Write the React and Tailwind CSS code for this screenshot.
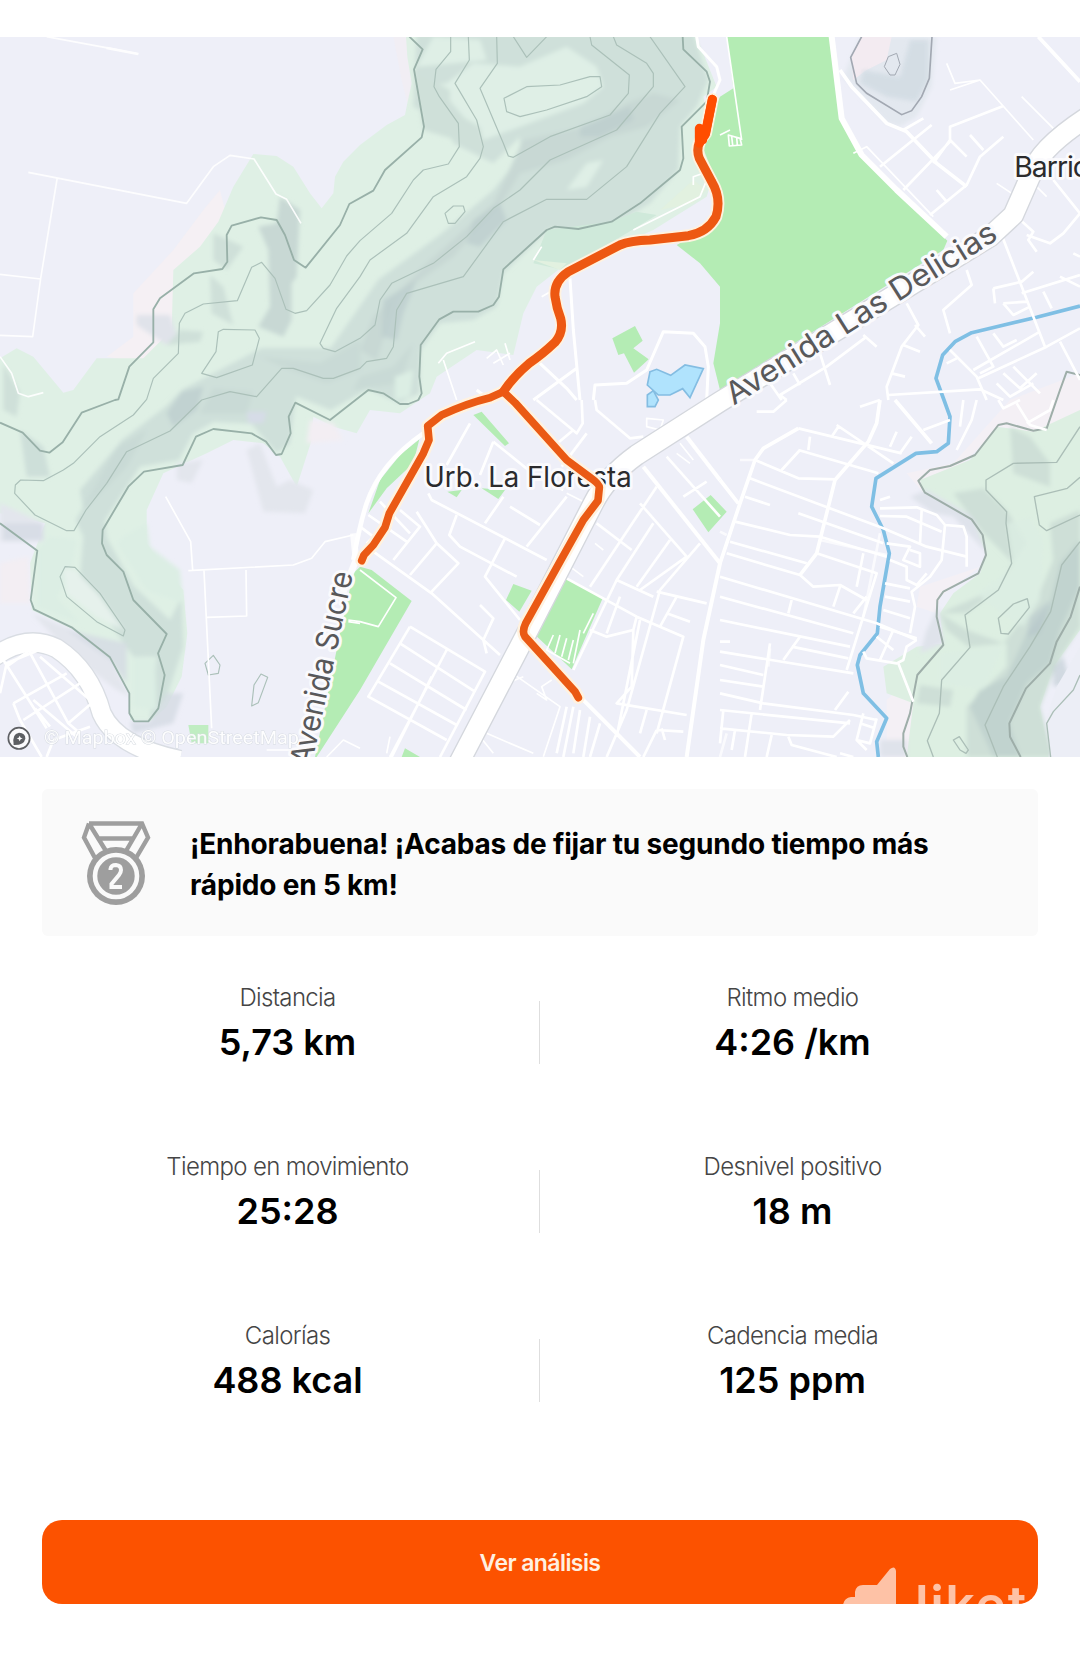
import React from 'react';

const stats = [
  { label: 'Distancia', value: '5,73 km' },
  { label: 'Ritmo medio', value: '4:26 /km' },
  { label: 'Tiempo en movimiento', value: '25:28' },
  { label: 'Desnivel positivo', value: '18 m' },
  { label: 'Calorías', value: '488 kcal' },
  { label: 'Cadencia media', value: '125 ppm' },
];

// The map is drawn at 3x and split in sectors, each with its own origin
const NW = 'translate(0 90)';
const N = 'translate(1080 90)';
const NE = 'translate(2160 90)';
const SW = 'translate(0 1200)';
const S = 'translate(1080 1200)';
const SE = 'translate(2160 1200)';

const Terrain = () => (
  <g>
    <filter id="relief" x="-5%" y="-5%" width="110%" height="110%">
      <feGaussianBlur stdDeviation="6" />
    </filter>
    <g transform={NW}>
      {/* pale slopes */}
      <path fill="#f5f0f4" d="M520 660 610 540 660 480 700 640 540 760 520 980 440 1000 320 980 400 920 400 790Z" />
      <path fill="#f1eef4" d="M1180 20 1240 20 1240 170 1222 220 1205 150Z" />
      <path
        fill="#dff0e5"
        d="M1218 20 1222 80 1235 160 1222 220 1215 255 1160 285 1080 345 1030 395 1005 440 1000 490 965 535 930 490 880 410 830 378 760 372 700 470 655 575 600 650 520 720 515 900 430 985 290 985 220 1080 190 1088 150 1040 100 980 50 955 0 985 0 1450 135 1480 105 1560 90 1600 95 1740 220 1800 330 1890 390 1990 390 2070 450 2075 500 2030 545 1940 562 1810 550 1680 490 1610 440 1540 440 1440 490 1330 620 1270 700 1230 790 1240 840 1280 890 1370 935 1230 940 1160 1000 1190 1070 1210 1110 1140 1200 1150 1290 1090 1310 1040 1430 960 1540 975 1570 850 1610 770 1700 700 1870 640 1960 600 2120 500 2150 400 2110 200 2150 170 2090 20Z"
      />
      <g filter="url(#relief)">
        <path fill="#e0e3ea" d="M410 855 510 855 535 930 500 945 410 885Z" />
        {/* shaded relief */}
        <path fill="#cfe0da" d="M1250 10 2080 10 2125 150 2090 230 2040 290 2035 420 1950 520 1850 580 1730 610 1650 595 1510 730 1490 830 1420 870 1320 880 1262 960 1258 1090 1198 1120 1105 1078 992 1140 888 1099 870 1240 830 1270 754 1181 640 1176 578 1212 537 1290 420 1310 315 1471 320 1522 400 1667 510 1770 545 1700 550 1850 500 2000 450 2070 470 1880 400 1880 330 1780 240 1640 250 1520 227 1471 362 1233 496 1130 548 1078 785 954 992 954 1136 748 1322 613 1480 480 1560 380 1560 320 1480 400 1360 340 1340 280 1240 230Z" />
        <path fill="#dfefe6" d="M1250 170 1340 160 1420 100 1560 110 1700 50 1790 110 1810 170 1750 220 1560 290 1450 330 1340 200ZM1700 480 1760 400 1810 390 1760 470ZM1300 20 1440 30 1460 90 1250 110Z" />
        <path fill="#c8d8d4" d="M1570 330 1760 290 1880 220 1960 190 2040 210 1940 290 1830 320 1700 390 1560 430 1500 530 1430 600 1360 680 1290 730 1190 800 1130 990 1080 960 1120 860 1280 700 1480 520ZM840 500 900 540 890 740 875 760 875 870 850 920 775 890 810 830 805 660 775 590 830 580Z" />
        <path fill="#bccdce" d="M1740 290 1890 230 1900 270 1800 320 1740 320ZM1400 640 1420 570 1500 520 1520 570 1440 650ZM1150 810 1250 750 1210 850 1190 930 1145 920ZM545 1085 610 1070 590 1140 520 1190 500 1150Z" opacity=".75" />
        <path fill="#c6d7d4" d="M780 980 960 1000 1080 930 1080 1020 980 1060 870 1020ZM60 1200 130 1250 150 1340 80 1340ZM640 1075 760 1085 740 1150 600 1150ZM350 1250 440 1200 380 1310 250 1440 240 1380ZM1240 940 1180 1010 1080 1040 1060 1080 1200 1060Z" opacity=".7" />
        <path fill="#cfe0d9" d="M640 610 730 650 680 720 640 690ZM630 735 670 770 700 885 635 850ZM540 900 610 905 600 935 500 945ZM1240 120 1350 180 1350 240 1440 290 1460 380 1370 330 1270 300ZM10 1000 60 1090 50 1160 10 1140Z" />
        <path fill="#e3e6ed" d="M0 1420 130 1480 130 1535 0 1535ZM530 1300 610 1290 575 1360 530 1350ZM740 1260 780 1240 830 1370 870 1350 940 1380 915 1450 790 1445ZM95 1750 220 1800 330 1890 390 2000 350 1980 220 1880Z" />
        <path fill="#d4dbe3" d="M10 1480 130 1480 130 1530 10 1530ZM200 1800 380 1840 380 1960 330 1890ZM500 1990 550 1990 520 2080 400 2110 390 2075 450 2075Z" opacity=".8" />
        <path fill="#f3eef3" d="M0 1600 85 1580 90 1720 0 1720ZM930 1170 1000 1180 1030 1230 920 1240Z" />
        <path fill="#d6dbe8" d="M740 1145 800 1145 790 1180 745 1180Z" opacity=".9" />
        <path fill="#dceee4" d="M150 1520 230 1530 210 1640 170 1700 240 1780 110 1730 110 1560ZM370 1520 440 1480 450 1550 540 1620 550 1720 440 1680 350 1540ZM400 1880 465 1890 470 2040 400 2030ZM1185 1040 1240 1020 1230 1100 1185 1110Z" />
        <path fill="#e6f1ec" d="M190 1615 225 1620 300 1700 370 1800 290 1760 200 1690Z" />
      </g>
    </g>
    <g transform={N}>
      <path fill="#cfe9da" d="M560 600 750 575 830 545 890 555 800 610 610 720 520 700Z" />
      <path fill="#e2f1e0" d="M900 540 1000 450 1040 480 1000 520ZM520 690 620 700 600 720Z" />
    </g>
    <g fill="none" stroke="#abc0b9" strokeWidth="3.5" strokeLinejoin="round" transform={NW}>
      <path strokeWidth="5.5" stroke="#98b0a8" d="M1228 20 1268 58 1242 118 1272 290 1265 322 1155 420 1120 482 1048 522 1020 585 917 713 882 690 855 615 830 570 783 562 695 587 680 615 682 695 667 717 582 730 480 805 460 838 460 937 388 1010 355 1108 345 1110 245 1148 188 1237 148 1268 120 1262 68 1208 0 1178M0 1480 112 1562 92 1710 102 1738 215 1792 330 1882 388 1990 388 2050 402 2074 445 2074 475 2035 494 1935 474 1870 500 1812 400 1710 370 1625 320 1575 306 1540 308 1500 385 1370 432 1325 548 1305 588 1220 640 1197 755 1210 798 1235 828 1275 845 1272 872 1210 866 1160 886 1118 990 1170 1105 1080 1150 1090 1200 1122 1225 1122 1255 1110 1265 1090 1258 1040 1262 945 1318 868 1360 845 1435 845 1480 825 1497 800 1510 718 1640 600 1665 590 1735 597 1835 575 1920 520 2040 420 2050 385 2045 290 2120 215 2130 155 2120 125 2050 58 2048 20" />
      <path d="M1352 20V65L1308 118 1302 170 1318 200 1375 280 1378 350 1345 402 1270 420 1240 450 1175 550 1080 632 1040 678 990 765 920 842 885 850 858 838 825 745 785 697 755 712 712 812 610 822 555 850 538 880 535 970 460 1045 440 1108 400 1155 300 1220 220 1300 190 1320 130 1352 62 1350 46 1365 44 1390 105 1455 200 1502 222 1502 258 1440 320 1360 380 1265 510 1203 605 1110 690 1085 770 1100 845 1015 880 1015 970 1045 1000 1045 1080 1015 1100 995 1160 985 1180 950 1190 840 1220 790 1390 740 1510 575 1640 508 1760 508 1880 410 1980 250 2055 170 1950 20" />
      <path d="M1405 20 1408 90 1365 160 1430 270 1450 350 1440 385 1400 440 1300 500 1220 610 1110 690 1080 740 1010 835 960 940 970 955 1005 965 1080 925 1125 885 1140 810 1175 760 1300 700 1400 620 1480 535 1560 480 1650 390 1850 300 1960 170 1960 130 1940 100 1850 45 1840 20" />
      <path d="M1490 20 1492 100 1440 175 1510 340 1525 378 1540 382 1650 320 1830 255 1885 190 1888 135 1775 45 1770 20M655 905 670 898 765 900 778 925 757 1005 650 1043 605 1030 648 965ZM1512 205 1580 170 1680 165 1770 140 1800 140 1805 170 1760 200 1640 240 1560 260 1520 245ZM1335 550 1360 528 1390 528 1395 545 1365 580 1345 580ZM1540 20 1580 82 1640 20M180 1640 195 1610 225 1612 300 1690 375 1800 370 1818 290 1775 200 1700ZM615 1900 640 1876 660 1905 655 1930 625 1935ZM783 1932 803 1942 775 2018 755 2028 762 1965Z" />
    </g>

    {/* north east knoll */}
    <g transform={NE}>
      <path fill="#e3e8ef" d="M420 20H650L635 170 590 260 540 290 500 280 370 140Z" filter="url(#relief)" />
      <path fill="#f3ebf1" d="M425 20H515L500 90 440 120 400 150 395 80Z" />
      <path fill="#d2dce3" d="M570 30H625V150L590 215 500 200 420 160 430 120 540 140Z" opacity=".85" filter="url(#relief)" />
      <g fill="none" stroke="#a2a8b2" strokeWidth="5">
        <path d="M425 20 392 82 410 160 440 190 545 254 575 242 605 200 628 145 636 20" />
        <path strokeWidth="3" d="M505 80 530 70 540 103 525 135 510 135 493 110Z" />
      </g>
    </g>

    {/* south east hills */}
    <g transform={SE}>
      <path fill="#f4f0f5" d="M870 0 1080 -80V80L1000 110 840 80 760 160 620 290 560 220 700 190ZM600 560 780 500 660 590 650 640 590 620ZM500 900 590 820 570 1071 500 1071Z" />
      <path fill="#ddefe2" d="M830 80 940 95 1080 30 1080 690 1000 800 960 920 985 1071H560L580 910 500 880 490 800 590 740 670 730 660 640 700 580 780 520 800 460 740 350 610 280 600 240 750 180Z" />
      <g filter="url(#relief)">
        <path fill="#dfe3eb" d="M570 290 620 270 760 350 800 460 700 350 640 340ZM620 690 655 620 670 730 600 760ZM480 1020 560 1020 560 1071 480 1071Z" />
        <path fill="#cedfd7" d="M700 280 790 265 860 330 920 430 870 500 830 570 740 640 660 640 680 690 745 740 860 730 860 800 740 920 740 1071H1000L960 920 1010 790 1080 680V330L990 370 1000 480 950 600 850 730 740 690 660 640 840 560 880 490 790 400ZM870 80 930 110 990 190 990 260 880 220ZM600 855 700 870 690 920 590 910Z" />
        <path fill="#c1d3cf" d="M1080 420 1020 490 990 610 920 700 860 830 780 870 750 920 820 1071H900L868 970 920 850 990 790 1020 690 1080 560Z" />
        <path fill="#dceee4" d="M860 370 930 350 970 420 960 600 910 680 840 640 770 580 880 500ZM660 760 850 740 790 870 660 850Z" opacity=".8" />
        <path fill="#b3c4ca" d="M930 650 990 600 960 700 920 710ZM1000 800 1030 770 1050 850 1000 860Z" opacity=".5" />
      </g>
      <path fill="#eceef6" d="M1080 740V1071H990L978 960 1010 860Z" />
      <g fill="none" stroke="#abbeb7" strokeWidth="4" strokeLinejoin="round">
        <path strokeWidth="6" stroke="#9eaea9" d="M1080 -75 1040 -85 1020 -30 980 85 940 92 860 70 835 75 765 165 690 198 630 210 595 242 615 278 755 358 788 405 798 465 775 520 670 575 652 600 650 650 670 735 592 825 570 940 550 1000 550 1040 562 1071M1080 560 1052 650 1010 725 990 790 918 865 868 970 870 1010 902 1071" />
        <path d="M1080 80 1010 187 880 190 798 240 798 270 860 335 858 370 875 490 835 570 735 645 750 742 665 840 658 940 622 1022 640 1071M1080 425 1025 495 992 635 930 740 850 860 795 975 832 1071M1080 825 1060 870 1000 935 980 970 992 1071M1080 232 1042 265 943 290 958 375 980 392 1080 345M835 655 880 612 922 596 928 622 865 702 843 700ZM700 1020 718 1010 745 1050 738 1060 720 1050Z" />
      </g>
    </g>
  </g>
);

const Parks = () => (
  <g fill="#b4ecb4">
    <path
      transform={NE}
      d="M20 20H330L365 270 430 390 540 490 682 632 670 660 0 1080 -20 1000 0 880 0 770 -60 700 -130 645 -50 600 0 540 -10 460 -60 330 0 200 40 175Z"
    />
    <g transform={N}>
      <path d="M757 925 825 888 848 932 820 955 866 988 822 1028 792 970 775 975Z" />
    </g>
    <g transform={S}>
      <path d="M340 45 365 35 447 130 435 138ZM178 118 160 190 80 265 25 340 60 240 120 165ZM262 275 305 270 290 292ZM365 265 435 270 415 297ZM460 552 515 572 478 635 438 600ZM615 532 728 595 635 808 520 700ZM1052 285 1100 335 1045 397 998 328ZM0 500 35 510 155 603 0 870 -130 1071 -135 1071 -60 700 -20 520ZM135 1045 180 1071H125Z" />
    </g>
    <g transform={SW}>
      <path d="M565 975H625V1030H575ZM400 1048 455 1055 460 1071H410Z" opacity=".8" />
    </g>
  </g>
);

const Water = () => (
  <g fill="#b0e3fd" stroke="#84bde2" strokeWidth="5">
    <path transform={N} d="M870 1025 890 1018 932 1036 975 1005 1030 1016 990 1103 968 1076 930 1095 895 1095 862 1065ZM862 1095 880 1082 895 1110 885 1130 862 1130Z" />
    <g fill="none" stroke="#7fbfe4" strokeWidth="11" strokeLinejoin="round">
      <path transform={NE} d="M1080 828 950 862 755 908 705 935 668 975 648 1045 672 1110 690 1160 685 1240 650 1265 588 1270 468 1345 455 1430 490 1500 508 1570 480 1730 472 1810 420 1875 412 1905 430 1990 500 2065 470 2135 475 2181" />
    </g>
  </g>
);

const Roads = () => (
  <g fill="none" stroke="#ffffff" strokeWidth="8" strokeLinejoin="round">
    <g transform={NW} strokeWidth="5" opacity=".9">
      <path d="M140 20 330 55 415 72M85 427 560 520 640 410 690 376 762 387 828 492 860 508 903 580M172 442 122 745 98 920 0 916M0 733 122 747M0 980 35 1030 55 1090 85 1100 130 1088" />
      <path strokeWidth="8" d="M320 54 415 72" />
    </g>
    <g transform={N} strokeWidth="5">
      <path strokeWidth="9" d="M1010 20 1015 50 1070 110 1080 150 1060 195" />
      <path d="M820 600 1020 500 1040 450M1000 465 1000 440 1030 430M520 690 545 650M545 800 580 780M235 1000 260 970 345 935M250 990 290 1110M380 985 410 960 430 1005M435 940 450 990M400 1000 450 970" />
      <path strokeWidth="9" d="M630 745 640 900 660 1110M540 1000 620 1075 650 1110M520 1110 650 1015M700 1110 705 1065 800 1060 860 1020 910 905 1000 910 1035 950 1045 1010 1040 1110M350 1080 370 1095" />
    </g>
    <g transform={NE}>
      <path strokeWidth="18" d="M335 20 365 265 425 375 530 480 680 620" />
      <path strokeWidth="11" d="M360 120 395 170 500 280 560 305 650 400 740 470M955 20 1080 155" />
      <path strokeWidth="5" d="M20 20 65 330M0 315 30 300M25 315 60 325 65 345 28 348ZM35 320 38 345M50 322 52 345M680 100 705 160 780 150 940 330M690 180 780 150M905 200 1000 295M400 370 440 350 640 560M830 460 890 500M940 460 980 500" />
      <path d="M480 410 635 285M550 480 690 335 690 290 850 228M550 300 610 265M640 400 690 330 740 380M750 315 790 360M630 555 740 465 780 380 850 320M650 480 680 515M1000 450 1080 550 1030 610 990 640 920 615M890 560 940 605 925 630 950 665M845 615 975 950M820 775 905 755 940 725M820 775 825 820M850 820 920 815M850 820 880 855 930 830M905 790 1080 735M970 785 995 835M1020 740 1080 770M1060 670 1080 680" />
      <path d="M740 720 755 765 670 840 690 910M560 820 595 885 545 950 500 1070 505 1110M585 885 615 920M550 945 600 965M515 1030 555 1040M430 915 470 950M440 920 320 1010 180 1095 200 1110M300 970 330 1065M150 1060 185 1110M220 1030 240 1065M690 960 770 1040 800 1110M770 920 820 1010 780 1030M775 1045 980 950 1080 895M820 910 850 950 890 930M760 1020 960 905M680 1000 710 985M850 1030 900 1075 950 1030M880 1010 960 1090M1020 935 1080 1050M830 1060 870 1100 940 1060M505 1095 780 1078 850 1110" />
    </g>
    <g transform={SW}>
      <path strokeWidth="5" d="M497 290 572 425 578 510M565 512 880 495 935 475 975 425 1060 405M612 512 635 985M738 510 740 648 620 652" />
      <path strokeWidth="62" stroke="#d9dde3" d="M-20 772Q80 700 170 745 270 810 305 940 350 1040 540 1080" />
      <path strokeWidth="54" d="M-20 772Q80 700 170 745 270 810 305 940 350 1040 540 1080" />
      <path strokeWidth="8" d="M10 780 140 985M80 740 205 970 240 1000M0 880 20 790 130 745M40 910 200 820M20 800 90 750M70 960 240 850M105 925 150 980M40 910 60 960 125 1071M120 770 270 900M100 900 230 1010M140 1071 160 1020 270 980M205 970 275 910" />
      <path strokeWidth="5" d="M800 1050 880 1050M980 1071 1030 1020 1080 1045M1045 665 1080 670" />
    </g>
    <g transform={S}>
      <path strokeWidth="14" d="M190 100Q60 190 20 310 0 370 -20 480" />
      <path d="M400 125 360 225M330 70 260 195M205 280 215 300 560 480M290 345 268 405 300 440 470 530M435 415 375 530 480 660M400 125 530 230 610 270M450 320 540 375M430 290 375 370M620 290 500 440M25 345 140 425M60 305 150 400M120 330 180 380 100 480M170 335 230 430 295 490 210 580M230 430 150 525M40 455 215 580 420 765M360 615 400 655 370 720 380 760M0 380 40 410 20 430" />
      <path d="M150 680 375 815 240 1071M150 680 25 890 260 1020M120 730 345 875M90 790 320 930M55 845 290 975M260 750 90 1071M215 830 95 1071" />
      <path strokeWidth="5" d="M0 510 108 593 55 680 0 665 -35 660M450 815 600 920 550 1070M575 840 545 860 560 900 530 880M380 1000 520 1060M360 1010 400 1060M90 1010 80 1060M440 850 490 830M580 705 560 750 630 790M600 705 585 760M620 715 605 770M640 720 625 780M660 690 640 790M700 640 670 700" />
      <path d="M530 0 650 100 668 70 665 0M705 0 710 30 810 115 850 110M580 140 640 90M605 200 680 100" />
      <path strokeWidth="12" d="M660 890 840 1071M980 110 1080 240M850 200 1080 490 1030 720 980 1071" />
      <path d="M610 530 830 650 970 710 890 1000M710 370 815 450M840 310 980 470 840 570M890 260 690 560M880 370 770 540 640 810M770 540 880 590M930 420 830 560M1020 430 900 570 800 930M890 575 1040 610M950 590 900 680M920 640 990 665M690 690 740 710 820 690 815 860 770 910 980 945M830 650 820 690M840 660 770 1010M800 930 740 1071M860 930 840 1000M890 990 970 995M890 990 850 1071M905 985 915 1020M780 590 740 700M620 920 590 1060M640 920 610 1071M660 930 640 1060M690 950 670 1071M720 970 690 1071M920 170 1080 350M970 290 1040 245" />
      <path strokeWidth="5" d="M950 160 990 190M960 130 1000 180M860 55 910 60 900 90 860 80ZM800 150 850 140M620 280 680 310M630 500 670 530M705 430 730 450" />
    </g>
    <g transform={SE}>
      <path strokeWidth="11" d="M0 240 55 310M235 85 130 145 105 180 60 310 0 490M480 0 470 70 445 125 345 240 290 460 240 525M525 0 635 130" />
      <path d="M235 85 545 160M105 180 235 235 350 238M235 150 475 220M240 150 185 210M270 110 265 150M355 80 335 110M350 75 520 190M90 235 490 385 620 440 740 470M75 290 150 315M235 340 490 430M45 365 210 405 300 410 500 470M30 425 260 490M20 460 240 525M0 530 470 670 590 720M0 590 400 700M0 660 390 740M0 725 30 725M0 755 400 820M0 795 130 825M0 840 130 860M0 880 130 910 400 945 470 960M0 930 390 970M0 985 200 1005 340 1010 390 960M240 525 280 560 360 555 440 600M290 460 470 520 380 810M430 460 410 560M360 560 340 620M215 600 205 640M440 590 400 640M240 710 190 780M215 740 385 775M150 730 120 930M345 930 385 875M95 940 75 1071M10 930 0 1030M45 990 35 1050M155 1005 140 1071M205 1010 215 1035 350 1071" />
      <path d="M730 0 720 80M770 0 755 60 710 150M420 20 480 0M110 35 160 35 200 0M610 90 690 60M530 95 510 140M575 110 540 160M480 325 590 322 650 345 675 375 665 480 630 530 575 575 585 620 570 700M480 348 560 350 665 395M675 375 730 380 740 410 740 500M605 330 600 430M500 430 570 440 550 480 600 500 600 460 570 450M510 480 560 500 560 540 590 555 620 520M495 550 570 565M495 590 570 605M490 630 570 655M480 300 510 290M520 690 480 780M470 710 520 750M590 720 560 740 550 780 530 790 440 775 430 755M535 790 580 905M480 680 590 715M430 940 410 1020 440 1050M470 955 450 1030 410 1020M420 970 465 985M360 1060 400 1071M835 0 850 25 900 0M890 10 930 75 980 90M920 70 990 30 1000 0" />
      <path d="M150 745 145 800M300 420 500 465M480 400 430 650M0 395 20 405M60 180 105 180M0 1071 20 1000" opacity=".7" />
    </g>

    {/* Avenida Las Delicias */}
    <g transform={S}>
      <path strokeWidth="66" stroke="#d4d7dd" d="M270 1140 500 700 700 310Q740 230 830 165L1080 5 1890 -490 1960 -555 2015 -680Q2040 -760 2200 -860" />
      <path strokeWidth="58" d="M270 1140 500 700 700 310Q740 230 830 165L1080 5 1890 -490 1960 -555 2015 -680Q2040 -760 2200 -860" />
      <path strokeWidth="20" d="M-20 400 -12 480 -60 600" opacity=".8" />
    </g>
  </g>
);

const Labels = () => (
  <g
    fontFamily="Inter, 'Liberation Sans', sans-serif"
    stroke="#fafafd"
    strokeWidth="18"
    strokeLinejoin="round"
    paintOrder="stroke"
  >
    <g fill="#2b2b2d" fontSize="85">
      <text x="1273" y="1460" textLength="622" lengthAdjust="spacingAndGlyphs">Urb. La Floresta</text>
      <text x="3043" y="530" letterSpacing="-3">Barrio</text>
    </g>
    <g fill="#58585a" fontSize="93">
      <text transform="translate(2201 1217) rotate(-32.2)" textLength="942" lengthAdjust="spacingAndGlyphs">Avenida Las Delicias</text>
      <text transform="translate(934 2300) rotate(-77.8)" textLength="592" lengthAdjust="spacingAndGlyphs">Avenida Sucre</text>
    </g>
  </g>
);

const Route = () => {
  const main = 'M1057 208 1037 310Q1003 345 1018 385L1055 455Q1085 505 1068 560 1043 607 985 617L870 630Q810 632 780 645L625 725Q580 755 585 800 590 835 602 865 612 905 585 937 545 975 510 998 460 1040 430 1085';
  const west = 'M430 1085 390 1103Q320 1120 245 1155L203 1188 207 1230 190 1270 88 1450 75 1492 40 1545 12 1575 5 1592';
  const south = 'M430 1085 465 1118 620 1290 690 1342Q718 1362 718 1372L714 1412 670 1470 600 1595 497 1780Q485 1805 495 1820L645 1985 655 2003';
  return (
    <g transform={N} fill="none" strokeLinecap="round" strokeLinejoin="round">
      <g stroke="#fff2df" strokeWidth="38">
        <path d={main} />
        <path d={west} />
        <path d={south} />
      </g>
      <g stroke="#ea5a14" strokeWidth="23">
        <path d={west} />
        <path d={south} />
        <path d={main} strokeWidth="27" stroke="#ed5812" />
      </g>
      <path d="M1057 208 1035 315 1018 340V295L1028 330" stroke="#ff4d00" strokeWidth="27" />
    </g>
  );
};

const RouteMap = () => (
  <svg viewBox="0 111 3240 2160" className="block h-[720px] w-full shrink-0 bg-[#eeeff8]">
    <Terrain />
    <Parks />
    <Water />
    <Roads />
    <Labels />
    <Route />
    <text
      x="132"
      y="2231"
      fontSize="56"
      fill="#ffffff"
      stroke="#d5dae0"
      strokeWidth="3"
      paintOrder="stroke"
      opacity=".9"
      textLength="765"
      lengthAdjust="spacingAndGlyphs"
      fontFamily="Roboto, sans-serif"
    >
      © Mapbox © OpenStreetMap
    </text>
    <g transform="translate(57 2215)">
      <circle r="32" fill="#fbfbfd" stroke="#5d5f63" strokeWidth="5" />
      <path d="M-16 20Q-22-14 0-17 20-16 19 1 15 21-16 20Z" fill="#5d5f63" />
      <path d="M2-8 5-2 11 0 5 3 2 9-1 3-7 0-1-2Z" fill="#ffffff" />
    </g>
  </svg>
);

const Medal = () => (
  <svg viewBox="0 0 72 88" className="h-[88px] w-[72px] shrink-0" fill="none" stroke="#9e9e9e" strokeWidth="4.4">
    <path d="M9 4.5H62L68 18.5 56 39M9 4.5 4 18.5 15 39M9 4.5 26 32M62 4.5 46 32M17 19.5H54" />
    <circle cx="36" cy="57" r="29" fill="#9e9e9e" stroke="none" />
    <circle cx="36" cy="57" r="21" stroke="#fafafa" strokeWidth="4.6" />
    <path d="M30.5 51V50Q31 46 36 46 41 46.5 41 51 41 53.5 39 56L31.5 65V68H42" stroke="#fafafa" strokeWidth="4" />
  </svg>
);

const Stat = ({ label, value }) => (
  <div className="flex w-full flex-col items-center pt-px">
    <p className="text-2xl leading-[30px] font-light tracking-[-0.027em] text-[#454545]">{label}</p>
    <p className="mt-[7px] text-4xl leading-[44px] font-semibold text-black">{value}</p>
  </div>
);

export default function App() {
  return (
    <div className="flex h-[1672px] w-[1080px] flex-col bg-white pt-[37px] font-['Inter',sans-serif]">
      <RouteMap />

      <div className="mx-[42px] mt-8 flex h-[147px] shrink-0 items-center gap-[38px] rounded-md bg-[#fafafa] pr-20 pl-[38px]">
        <Medal />
        <p className="pt-1 text-[28px] leading-[41px] font-bold tracking-[-0.0065em] text-black">
          ¡Enhorabuena! ¡Acabas de fijar tu segundo tiempo más rápido en 5 km!
        </p>
      </div>

      <div className="mt-[46px] grid shrink-0 grid-cols-2 gap-y-[88px] px-[35px]">
        {stats.map((stat, i) => (
          <div key={stat.label} className="relative flex h-[81px]">
            <Stat label={stat.label} value={stat.value} />
            {i % 2 === 0 && <div className="absolute top-[19px] right-0 h-[63px] w-px bg-[#dedede]" />}
          </div>
        ))}
      </div>

      <button className="relative mx-[42px] mt-[119px] h-[84px] shrink-0 overflow-hidden rounded-[20px] bg-[#fc5200] pt-[3px] text-[23px] font-semibold tracking-[-0.025em] text-[#fff0e0]">
        Ver análisis
        <div className="absolute top-[47px] left-[801px] flex tracking-normal text-white/65">
          <svg viewBox="0 0 54 60" className="h-[60px] w-[54px]" fill="currentColor">
            <path d="M0 38Q1 31 8 30H12V25Q13 18 20 18H34L47 2Q52-2 53 4V60H0Z" />
          </svg>
          <span className="mt-[6px] ml-[18px] text-[52px] leading-[63px] font-semibold tracking-[0.03em]">liket</span>
        </div>
      </button>
    </div>
  );
}
